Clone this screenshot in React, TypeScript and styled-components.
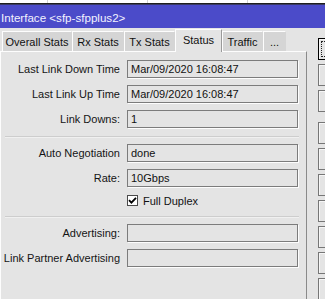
import React from "react";
import styled, { createGlobalStyle } from "styled-components";

const GlobalStyle = createGlobalStyle`
  html, body { margin: 0; padding: 0; background: #e4e4e4; }
  body { font-family: "Liberation Sans", Arial, sans-serif; }
  * { box-sizing: border-box; }
`;

const Screen = styled.div`
  width: 325px;
  height: 299px;
  overflow: hidden;
  background: #e4e4e4;
  display: flex;
  flex-direction: column;
  font-family: "Liberation Sans", Arial, sans-serif;
  font-size: 11px;
  color: #111;
`;

const BackStrip = styled.div`
  height: 3px;
  display: flex;
  background: #fff;
  flex: none;
`;

const BackCell = styled.div<{ $w: number }>`
  width: ${(p) => p.$w}px;
  flex: none;
  border-right: 1px solid #d4d4d4;
`;

const BackRule = styled.div`
  height: 2px;
  flex: none;
  border-top: 1px solid #1e1e1e;
  border-bottom: 1px solid #3a3a66;
`;

const TitleBar = styled.div`
  height: 23px;
  flex: none;
  background: #4b4bc9;
  color: #f2f2ff;
  font-size: 11.6px;
  display: flex;
  align-items: center;
  padding: 2px 0 0 1px;
  white-space: nowrap;
`;

const Body = styled.div`
  flex: 1;
  display: flex;
  min-height: 0;
`;

const LeftColumn = styled.div`
  width: 307px;
  flex: none;
  display: flex;
  flex-direction: column;
`;

const TabRow = styled.div`
  height: 23px;
  flex: none;
  display: flex;
  align-items: flex-end;
  padding-left: 2px;
  position: relative;
  z-index: 1;
`;

const Tab = styled.div<{ $w: number; $active?: boolean }>`
  width: ${(p) => p.$w}px;
  height: ${(p) => (p.$active ? 23 : 20)}px;
  margin-bottom: ${(p) => (p.$active ? -1 : 0)}px;
  padding-bottom: ${(p) => (p.$active ? 3 : 0)}px;
  flex: none;
  display: flex;
  align-items: center;
  justify-content: center;
  white-space: nowrap;
  background: ${(p) => (p.$active ? "#e4e4e4" : "#d5d5d5")};
  border-top: 1px solid #fdfdfd;
  border-left: 1px solid #fdfdfd;
  border-right: 1px solid ${(p) => (p.$active ? "#9a9a9a" : "#d5d5d5")};
  color: #111;
`;

const Panel = styled.div`
  flex: 1;
  background: #e4e4e4;
  border-top: 1px solid #fdfdfd;
  border-left: 1px solid #fdfdfd;
  border-right: 1px solid #8a8a8a;
  padding-top: 8px;
  display: flex;
  flex-direction: column;
`;

const Section = styled.div`
  display: flex;
  flex-direction: column;
  gap: 7px;
`;

const FieldRow = styled.div`
  display: grid;
  grid-template-columns: 119px 171px;
  column-gap: 7px;
  align-items: center;
  height: 18px;
`;

const Label = styled.div`
  text-align: right;
  white-space: nowrap;
  color: #141414;
`;

const ValueBox = styled.div`
  height: 18px;
  border: 1px solid #7c7c7c;
  box-shadow: 1px 1px 0 #fdfdfd;
  background: #e4e4e4;
  padding: 0 0 0 3px;
  display: flex;
  align-items: center;
  white-space: nowrap;
  color: #111;
`;

const Divider = styled.div<{ $above: number }>`
  margin: ${(p) => p.$above}px 0 7px 4px;
  width: 294px;
  height: 1px;
  background: #cdcdcd;
  box-shadow: 0 1px 0 #f0f0f0;
  flex: none;
`;

const CheckRow = styled.div`
  margin-top: 1px;
  height: 11px;
  display: flex;
  align-items: center;
  padding-left: 126px;
  gap: 5px;
`;

const CheckBox = styled.div`
  width: 11px;
  height: 11px;
  border: 1px solid #4a4a4a;
  background: #fff;
  display: flex;
  align-items: center;
  justify-content: center;
`;

const CheckLabel = styled.span`
  white-space: nowrap;
  color: #111;
`;

const SideColumn = styled.div`
  margin-left: 11px;
  padding-top: 10px;
  display: flex;
  flex-direction: column;
  gap: 4px;
`;

const SideButton = styled.div<{ $focused?: boolean; $extra?: number }>`
  width: 60px;
  height: 22px;
  flex: none;
  margin-top: ${(p) => p.$extra || 0}px;
  border: 1px solid ${(p) => (p.$focused ? "#000" : "#767676")};
  background: #e4e4e4;
  box-shadow: inset 1px 1px 0 #f6f6f6;
  padding: 2px;
`;

const FocusRing = styled.div`
  width: 100%;
  height: 100%;
  border: 1px dotted #222;
`;

const tabs = [
  { name: "Overall Stats", w: 70 },
  { name: "Rx Stats", w: 52 },
  { name: "Tx Stats", w: 51 },
  { name: "Status", w: 47, active: true },
  { name: "Traffic", w: 41 },
  { name: "...", w: 23 },
];

const Field = ({ label, value }: { label: string; value?: string }) => (
  <FieldRow>
    <Label>{label}</Label>
    <ValueBox>{value}</ValueBox>
  </FieldRow>
);

export default function App() {
  return (
    <>
      <GlobalStyle />
      <Screen>
        <BackStrip>
          <BackCell $w={48} />
          <BackCell $w={100} />
          <BackCell $w={100} />
        </BackStrip>
        <BackRule />
        <TitleBar>Interface &lt;sfp-sfpplus2&gt;</TitleBar>
        <Body>
          <LeftColumn>
            <TabRow>
              {tabs.map((t) => (
                <Tab key={t.name} $w={t.w} $active={t.active}>
                  {t.name}
                </Tab>
              ))}
            </TabRow>
            <Panel>
              <Section>
                <Field label="Last Link Down Time" value="Mar/09/2020 16:08:47" />
                <Field label="Last Link Up Time" value="Mar/09/2020 16:08:47" />
                <Field label="Link Downs:" value="1" />
              </Section>
              <Divider $above={8} />
              <Section>
                <Field label="Auto Negotiation" value="done" />
                <Field label="Rate:" value="10Gbps" />
                <CheckRow>
                  <CheckBox>
                    <svg width="9" height="9" viewBox="0 0 9 9">
                      <path d="M1 4.2 L3.4 6.6 L8 1.8" stroke="#000" strokeWidth="1.8" fill="none" />
                    </svg>
                  </CheckBox>
                  <CheckLabel>Full Duplex</CheckLabel>
                </CheckRow>
              </Section>
              <Divider $above={10} />
              <Section>
                <Field label="Advertising:" />
                <Field label="Link Partner Advertising" />
              </Section>
            </Panel>
          </LeftColumn>
          <SideColumn>
            <SideButton $focused>
              <FocusRing />
            </SideButton>
            <SideButton />
            <SideButton />
            <SideButton $extra={6} />
            <SideButton />
            <SideButton />
            <SideButton />
            <SideButton />
            <SideButton />
            <SideButton />
          </SideColumn>
        </Body>
      </Screen>
    </>
  );
}
